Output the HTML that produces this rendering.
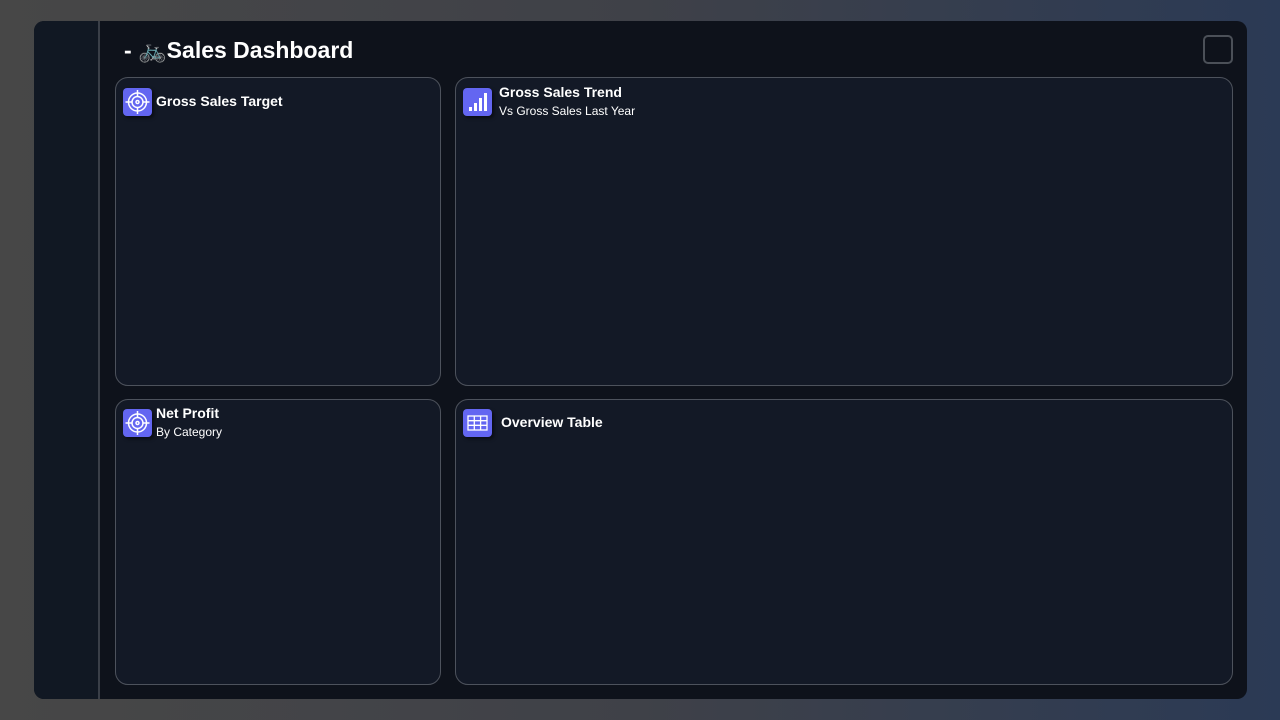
<!DOCTYPE html>
<html><head><style>
*{margin:0;padding:0;box-sizing:border-box}
body{width:1280px;height:720px;overflow:hidden;background:linear-gradient(90deg,#474747 0%,#3f4148 50%,#2b3a55 100%);font-family:"Liberation Sans","DejaVu Sans",sans-serif;color:#fff;position:relative}
.wrap{position:absolute;left:34px;top:21px;width:1213px;height:678px;border-radius:10px;background:#0e121b;overflow:hidden}
.side{position:absolute;left:0;top:0;width:66px;height:100%;background:#111823;border-right:2px solid #3a3f48}
.title{position:absolute;left:90px;top:16px;font-size:23px;font-weight:bold}
.btn{position:absolute;left:1169px;top:14px;width:30px;height:29px;border:2px solid #4b5058;border-radius:5px}
.card{position:absolute;background:#131926;border:1px solid #4d525c;border-radius:13px}
.ic{position:absolute;width:29px;height:28px;background:#6366f1;border-radius:4px;box-shadow:2px 2px 3px rgba(0,0,0,.5)}
.h{position:absolute;font-size:14px;font-weight:bold;white-space:nowrap}
.s{position:absolute;font-size:12px;white-space:nowrap}
</style></head><body>
<div class="wrap">
<div class="side"></div>
<div class="title">- 🚲Sales Dashboard</div>
<div class="btn"></div>
</div>
<div class="card" style="left:115px;top:77px;width:326px;height:309px">
<div class="ic" style="left:7px;top:10px"><svg width="29" height="28" viewBox="0 0 29 28" fill="none" stroke="#fff" stroke-width="1.5"><circle cx="14.5" cy="14" r="9"/><circle cx="14.5" cy="14" r="5.5"/><circle cx="14.5" cy="14" r="1.5"/><path d="M14.5 2v6M14.5 20v6M2.5 14h6M20.5 14h6"/></svg></div>
<div class="h" style="left:40px;top:15px">Gross Sales Target</div></div>
<div class="card" style="left:455px;top:77px;width:778px;height:309px">
<div class="ic" style="left:7px;top:10px"><svg width="29" height="28"><rect x="6" y="19" width="3" height="4" fill="#fff"/><rect x="11" y="15" width="3" height="8" fill="#fff"/><rect x="16" y="10" width="3" height="13" fill="#fff"/><rect x="21" y="5" width="3" height="18" fill="#fff"/></svg></div>
<div class="h" style="left:43px;top:6px">Gross Sales Trend</div>
<div class="s" style="left:43px;top:26px">Vs Gross Sales Last Year</div></div>
<div class="card" style="left:115px;top:399px;width:326px;height:286px">
<div class="ic" style="left:7px;top:9px"><svg width="29" height="28" viewBox="0 0 29 28" fill="none" stroke="#fff" stroke-width="1.5"><circle cx="14.5" cy="14" r="9"/><circle cx="14.5" cy="14" r="5.5"/><circle cx="14.5" cy="14" r="1.5"/><path d="M14.5 2v6M14.5 20v6M2.5 14h6M20.5 14h6"/></svg></div>
<div class="h" style="left:40px;top:5px">Net Profit</div>
<div class="s" style="left:40px;top:25px">By Category</div></div>
<div class="card" style="left:455px;top:399px;width:778px;height:286px">
<div class="ic" style="left:7px;top:9px"><svg width="29" height="28" fill="none" stroke="#fff" stroke-width="1.3"><rect x="5" y="7" width="19" height="14"/><path d="M5 11.7h19M5 16.3h19M11.3 7v14M17.6 7v14"/></svg></div>
<div class="h" style="left:45px;top:14px">Overview Table</div></div>
</body></html>
